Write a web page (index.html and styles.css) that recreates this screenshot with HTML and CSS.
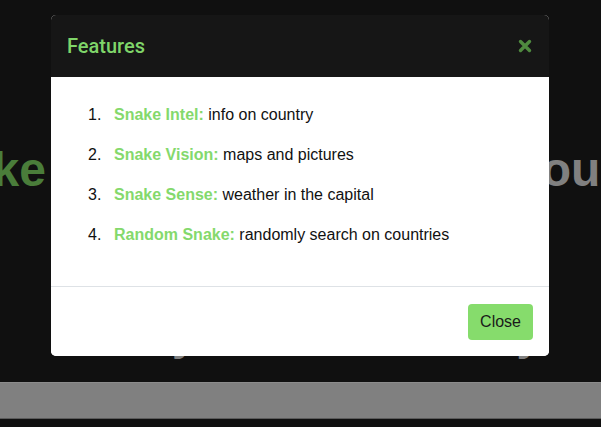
FILE: index.html
```html
<!DOCTYPE html>
<html>
<head>
<meta charset="utf-8">
<link rel="stylesheet" href="styles.css">
</head>
<body>
<div class="page">
  <h1 class="hero"><span class="hero-green">Snake</span><span class="hero-mid"></span><span class="hero-gray">you</span></h1>
  <div class="sub-wrap"><h2 class="sub">Know your own country</h2></div>
  <div class="bar"></div>
</div>
<div class="modal">
  <div class="modal-header">
    <h5 class="modal-title">Features</h5>
    <button class="close-x" aria-label="Close">
      <svg width="14" height="14" viewBox="0 0 14 14"><path d="M2.5 2.5 L11.5 11.5 M11.5 2.5 L2.5 11.5" stroke="#4f8a3f" stroke-width="3.4" stroke-linecap="round"/></svg>
    </button>
  </div>
  <div class="modal-body">
    <ol class="features">
      <li><span class="label">Snake Intel:</span> info on country</li>
      <li><span class="label">Snake Vision:</span> maps and pictures</li>
      <li><span class="label">Snake Sense:</span> weather in the capital</li>
      <li><span class="label">Random Snake:</span> randomly search on countries</li>
    </ol>
  </div>
  <div class="modal-footer">
    <button class="btn-close">Close</button>
  </div>
</div>
</body>
</html>
```

FILE: styles.css
```css
html, body {
  margin: 0;
  padding: 0;
  background: #101010;
  width: 601px;
  height: 427px;
  overflow: hidden;
  font-family: "Liberation Sans", Arial, sans-serif;
}
body {
  position: relative;
}
.page {
  height: 427px;
  display: flex;
  flex-direction: column;
  align-items: center;
}
.hero {
  align-self: stretch;
  margin: 140px 0 0;
  display: grid;
  grid-template-columns: 46px 469px auto;
  font-size: 48px;
  font-weight: bold;
  line-height: 60px;
  white-space: nowrap;
}
.hero-green {
  color: #4a7d3a;
  justify-self: end;
}
.hero-gray { color: #808080; }
.sub-wrap {
  align-self: stretch;
  margin-top: 156px;
  height: 12px;
  overflow: hidden;
  display: flex;
  justify-content: center;
}
.sub {
  margin: -43px 0 0;
  padding-right: 20px;
  font-size: 44px;
  line-height: 44px;
  font-weight: bold;
  color: #808080;
  white-space: nowrap;
}
.bar {
  margin-top: auto;
  margin-bottom: 8px;
  align-self: stretch;
  height: 35px;
  background: #808080;
  border-top: 1px solid #8c8c8c;
  border-bottom: 1px solid #5a5a5a;
}
.modal {
  position: absolute;
  z-index: 1050;
  left: 51px;
  top: 15px;
  width: 498px;
  box-sizing: border-box;
  background-color: #ffffff;
  border-radius: 5px;
  overflow: hidden;
}
.modal-header {
  height: 62px;
  box-sizing: border-box;
  background: #161616;
  display: flex;
  align-items: center;
  justify-content: space-between;
  padding: 0 16px;
}
.modal-title {
  margin: 0;
  font-family: Roboto, "Liberation Sans", sans-serif;
  font-weight: 500;
  font-size: 20px;
  color: #7fd569;
}
.close-x {
  background: none;
  border: 0;
  padding: 0;
  margin-right: 1px;
  width: 14px;
  height: 14px;
  display: flex;
}
.modal-body {
  background: #fff;
  padding: 18px 16px 14px;
}
.features {
  margin: 0 0 17px;
  padding-left: 21px;
  list-style: none;
  counter-reset: feat;
  font-size: 16px;
  color: #111;
}
.features li {
  padding: 8px 0;
  line-height: 24px;
  counter-increment: feat;
  display: flex;
  white-space: pre;
}
.features li::before {
  content: counter(feat) ".";
  width: 26px;
  flex: none;
}
.label {
  color: #84d96c;
  font-weight: bold;
}
.modal-footer {
  background: #fff;
  border-top: 1px solid #dee2e6;
  height: 70px;
  box-sizing: border-box;
  display: flex;
  justify-content: flex-end;
  align-items: center;
  padding: 0 16px;
}
.btn-close {
  background: #86dc6c;
  border: 0;
  border-radius: 4px;
  height: 36px;
  padding: 0 12px;
  font-family: "Liberation Sans", Arial, sans-serif;
  font-size: 16px;
  color: #1a1a1a;
}
```
